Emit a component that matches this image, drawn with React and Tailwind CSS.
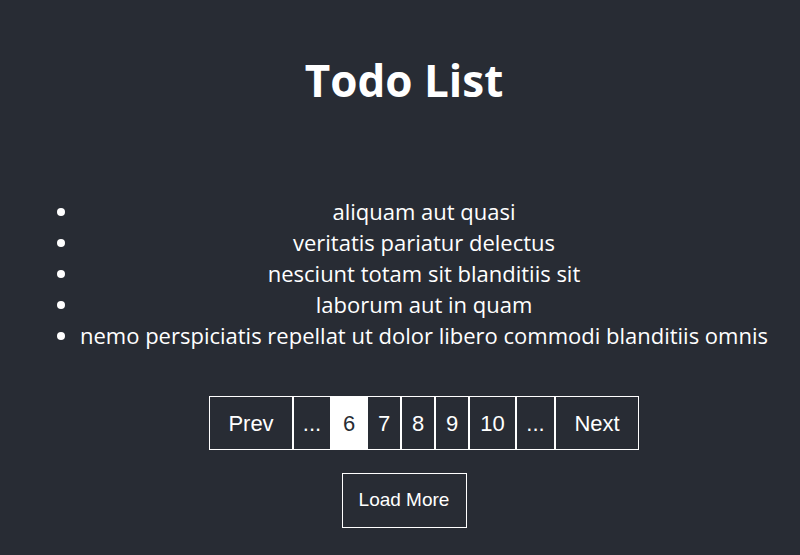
import React from 'react';

const todos = [
  'aliquam aut quasi',
  'veritatis pariatur delectus',
  'nesciunt totam sit blanditiis sit',
  'laborum aut in quam',
  'nemo perspiciatis repellat ut dolor libero commodi blanditiis omnis',
];

const pages = [
  { label: 'Prev', w: 'w-[84px]' },
  { label: '...', w: 'w-[38px]' },
  { label: '6', w: 'w-[36px]', active: true },
  { label: '7', w: 'w-[34px]' },
  { label: '8', w: 'w-[34px]' },
  { label: '9', w: 'w-[34px]' },
  { label: '10', w: 'w-[47px]' },
  { label: '...', w: 'w-[39px]' },
  { label: 'Next', w: 'w-[84px]' },
];

export default function App() {
  return (
    <div className="min-h-screen bg-[#282c34] text-white flex flex-col items-center pl-[8px] font-['Open_Sans',sans-serif]">
      <h1 className="mt-[52px] text-[44px] font-bold leading-[56px]">Todo List</h1>

      <ul className="mt-[88px] list-disc pl-[40px] text-[22px] leading-[31px] text-center">
        {todos.map((todo, i) => (
          <li key={i}>{todo}</li>
        ))}
      </ul>

      {/* Pagination */}
      <ul className="mt-[45px] pl-[40px] flex font-['Liberation_Sans',Arial,sans-serif] text-[22px]">
        {pages.map((p, i) => (
          <li
            key={i}
            className={`${p.w} h-[54px] flex items-center justify-center border border-white ${
              p.active ? 'bg-white text-[#282c34]' : ''
            }`}
          >
            {p.label}
          </li>
        ))}
      </ul>

      <button className="mt-[23px] w-[125px] h-[55px] border border-white text-[19px] font-['Liberation_Sans',Arial,sans-serif] text-white">
        Load More
      </button>
    </div>
  );
}
